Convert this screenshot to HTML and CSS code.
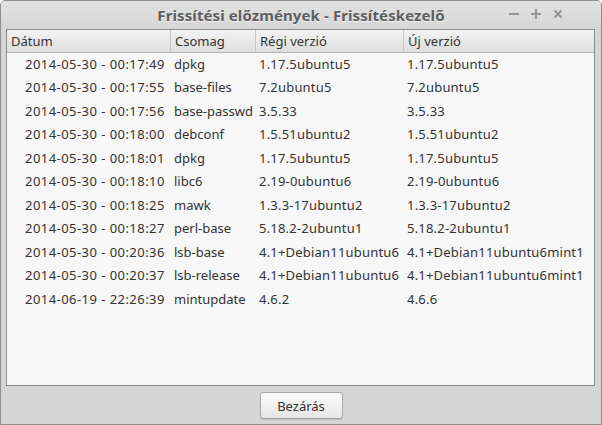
FILE: index.html
```html
<!DOCTYPE html>
<html lang="hu">
  <head>
    <meta charset="UTF-8" />
    <meta name="viewport" content="width=device-width, initial-scale=1.0" />
    <title>Frissítési előzmények - Frissítéskezelő</title>
    <link rel="stylesheet" href="styles.css">
  </head>
  <body>
    <div class="window">
      <div class="titlebar">
        <span class="title">Frissítési előzmények - Frissítéskezelő</span>
        <div class="controls">
          <svg class="ctl" width="12" height="12" viewBox="0 0 12 12"><path d="M1 6h10" /></svg>
          <svg class="ctl" width="12" height="12" viewBox="0 0 12 12"><path d="M1 6h10M6 1v10" /></svg>
          <svg class="ctl" width="12" height="12" viewBox="0 0 12 12"><path d="M2.5 2.5l7 7M9.5 2.5l-7 7" /></svg>
        </div>
      </div>

      <div class="frame">
        <div class="row head">
          <div class="cell">Dátum</div>
          <div class="cell">Csomag</div>
          <div class="cell">Régi verzió</div>
          <div class="cell">Új verzió</div>
        </div>
        <div class="row"><div class="cell date">2014-05-30 - 00:17:49</div><div class="cell">dpkg</div><div class="cell ver">1.17.5ubuntu5</div><div class="cell ver">1.17.5ubuntu5</div></div>
        <div class="row"><div class="cell date">2014-05-30 - 00:17:55</div><div class="cell">base-files</div><div class="cell ver">7.2ubuntu5</div><div class="cell ver">7.2ubuntu5</div></div>
        <div class="row"><div class="cell date">2014-05-30 - 00:17:56</div><div class="cell">base-passwd</div><div class="cell ver">3.5.33</div><div class="cell ver">3.5.33</div></div>
        <div class="row"><div class="cell date">2014-05-30 - 00:18:00</div><div class="cell">debconf</div><div class="cell ver">1.5.51ubuntu2</div><div class="cell ver">1.5.51ubuntu2</div></div>
        <div class="row"><div class="cell date">2014-05-30 - 00:18:01</div><div class="cell">dpkg</div><div class="cell ver">1.17.5ubuntu5</div><div class="cell ver">1.17.5ubuntu5</div></div>
        <div class="row"><div class="cell date">2014-05-30 - 00:18:10</div><div class="cell">libc6</div><div class="cell ver">2.19-0ubuntu6</div><div class="cell ver">2.19-0ubuntu6</div></div>
        <div class="row"><div class="cell date">2014-05-30 - 00:18:25</div><div class="cell">mawk</div><div class="cell ver">1.3.3-17ubuntu2</div><div class="cell ver">1.3.3-17ubuntu2</div></div>
        <div class="row"><div class="cell date">2014-05-30 - 00:18:27</div><div class="cell">perl-base</div><div class="cell ver">5.18.2-2ubuntu1</div><div class="cell ver">5.18.2-2ubuntu1</div></div>
        <div class="row"><div class="cell date">2014-05-30 - 00:20:36</div><div class="cell">lsb-base</div><div class="cell ver">4.1+Debian11ubuntu6</div><div class="cell ver">4.1+Debian11ubuntu6mint1</div></div>
        <div class="row"><div class="cell date">2014-05-30 - 00:20:37</div><div class="cell">lsb-release</div><div class="cell ver">4.1+Debian11ubuntu6</div><div class="cell ver">4.1+Debian11ubuntu6mint1</div></div>
        <div class="row"><div class="cell date">2014-06-19 - 22:26:39</div><div class="cell">mintupdate</div><div class="cell ver">4.6.2</div><div class="cell ver">4.6.6</div></div>
      </div>

      <div class="actions">
        <button class="btn" type="button">Bezárás</button>
      </div>
    </div>
  </body>
</html>
```

FILE: styles.css
```css
body {
  margin: 0;
  background: #ffffff;
  font-family: "Noto Sans", "DejaVu Sans", sans-serif;
  font-size: 13px;
  color: #333333;
}
.window {
  width: 602px;
  height: 425px;
  box-sizing: border-box;
  border: 1px solid #8e8e8e;
  border-radius: 5px 5px 0 0;
  background: #d6d6d6;
  display: flex;
  flex-direction: column;
  overflow: hidden;
}
.titlebar {
  height: 28px;
  flex: none;
  display: flex;
  align-items: center;
  justify-content: center;
  position: relative;
  background: linear-gradient(#e2e2e2, #d6d6d6);
}
.title {
  font-weight: bold;
  font-size: 15px;
  letter-spacing: 0.1px;
  color: #5e5e5e;
  text-shadow: 0 1px 0 #efefef;
}
.controls {
  position: absolute;
  right: 37px;
  top: 7px;
  display: flex;
  gap: 10px;
}
.ctl {
  fill: none;
  stroke: #959595;
  stroke-width: 2;
}
.frame {
  margin: 0 6px 0 5px;
  height: 355px;
  flex: none;
  border: 1px solid #8c8c8c;
  background: #f7f7f7;
}
.row {
  display: grid;
  grid-template-columns: 164px 85px 148px 1fr;
  height: 23.5px;
  align-items: center;
  white-space: nowrap;
}
.cell {
  padding-left: 3px;
  padding-bottom: 2px;
  overflow: hidden;
}
.date {
  padding-left: 18px;
  letter-spacing: 0.45px;
}
.ver {
  letter-spacing: 0.2px;
}
.head {
  height: 22px;
  align-items: stretch;
  background: linear-gradient(#f3f3f3, #dedede);
  border-bottom: 1px solid #b4b4b4;
}
.head .cell {
  display: flex;
  align-items: center;
  border-right: 1px solid #c4c4c4;
  padding-left: 4px;
  padding-bottom: 0;
}
.head .cell:last-child {
  border-right: none;
}
.actions {
  flex: 1;
  display: flex;
  justify-content: center;
  align-items: center;
}
.btn {
  width: 83px;
  height: 27px;
  margin-top: 1px;
  font-family: inherit;
  font-size: 13px;
  color: #333333;
  background: linear-gradient(#fbfbfb, #e6e6e6);
  border: 1px solid #a4a4a4;
  border-radius: 3px;
  box-shadow: 0 1px 0 #bdbdbd;
}
```
